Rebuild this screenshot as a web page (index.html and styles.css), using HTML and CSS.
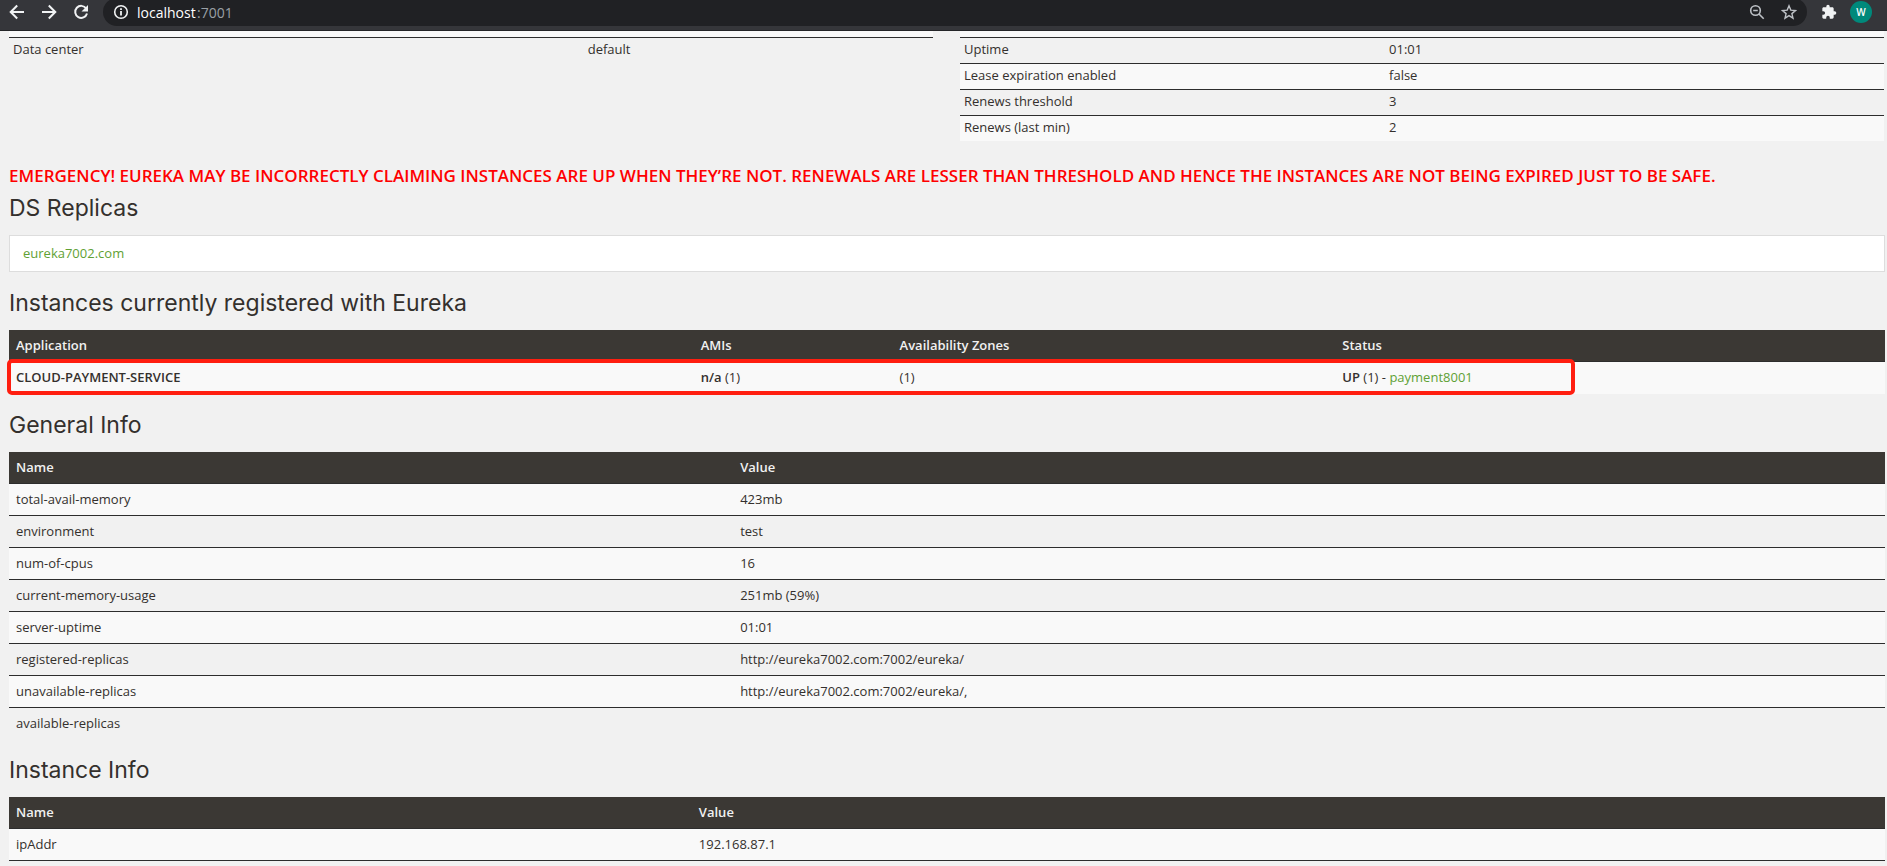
FILE: index.html
```html
<!DOCTYPE html>
<html lang="en">
<head>
    <meta charset="UTF-8">
    <meta name="viewport" content="width=device-width, initial-scale=1.0">
    <title>Eureka</title>
    <link rel="stylesheet" href="styles.css">
</head>
<body>
    <header class="toolbar">
        <div class="nav-buttons">
            <button class="icon-button" aria-label="Back">
                <svg width="16" height="16" viewBox="0 0 16 16" fill="none" stroke="currentColor" stroke-width="2"><path d="M15 8H2.500M8.200 1.500L1.700 8l6.500 6.500"/></svg>
            </button>
            <button class="icon-button" aria-label="Forward">
                <svg width="16" height="16" viewBox="0 0 16 16" fill="none" stroke="currentColor" stroke-width="2"><path d="M1 8h12.500M7.800 1.500L14.300 8l-6.500 6.500"/></svg>
            </button>
            <button class="icon-button" aria-label="Reload">
                <svg width="16" height="16" viewBox="0 0 16 16"><path d="M13.200 4.500A6 6 0 1 0 14 9.500" fill="none" stroke="currentColor" stroke-width="2"/><path d="M15 1v6.500H8.500z" fill="currentColor"/></svg>
            </button>
        </div>
        <div class="omnibox">
            <button class="icon-button" aria-label="Site information">
                <svg width="16" height="16" viewBox="0 0 16 16" fill="none" stroke="currentColor"><circle cx="8" cy="8" r="6.300" stroke-width="1.600"/><path d="M8 7v4.500M8 4.200v1.800" stroke-width="1.800"/></svg>
            </button>
            <label class="address"><input class="address-host" type="text" value="localhost" aria-label="Address">:7001</label>
            <button class="icon-button muted" aria-label="Zoom out">
                <svg width="16" height="16" viewBox="0 0 16 16" fill="none" stroke="currentColor" stroke-width="1.600"><circle cx="6.500" cy="6.500" r="4.800"/><path d="M10 10l4.700 4.700M4.200 6.500h4.600"/></svg>
            </button>
            <button class="icon-button muted" aria-label="Bookmark this page">
                <svg width="16" height="16" viewBox="0 0 16 16" fill="none" stroke="currentColor" stroke-width="1.400"><path d="M8 1.800l1.800 4.300 4.700.4-3.600 3.100 1.100 4.600L8 11.700l-4 2.500 1.100-4.600L1.500 6.500l4.700-.4z"/></svg>
            </button>
        </div>
        <button class="icon-button" aria-label="Extensions">
            <svg width="16" height="16" viewBox="0 0 24 24" fill="currentColor"><path d="M20.500 11H19V7c0-1.100-.9-2-2-2h-4V3.500a2.500 2.500 0 0 0-5 0V5H4c-1.100 0-2 .9-2 2v3.800h1.500a2.700 2.700 0 0 1 0 5.400H2V20c0 1.100.9 2 2 2h3.800v-1.500a2.700 2.700 0 0 1 5.400 0V22H17c1.100 0 2-.9 2-2v-4h1.500a2.500 2.500 0 0 0 0-5z"/></svg>
        </button>
        <button class="avatar">W</button>
    </header>

    <main class="content">
        <div class="status-row">
            <table class="table table-condensed table-left">
                <tbody>
                    <tr><td>Data center</td><td>default</td></tr>
                </tbody>
            </table>
            <table class="table table-condensed table-right">
                <tbody>
                    <tr><td>Uptime</td><td>01:01</td></tr>
                    <tr><td>Lease expiration enabled</td><td>false</td></tr>
                    <tr><td>Renews threshold</td><td>3</td></tr>
                    <tr><td>Renews (last min)</td><td>2</td></tr>
                </tbody>
            </table>
        </div>

        <h4 class="emergency">EMERGENCY! EUREKA MAY BE INCORRECTLY CLAIMING INSTANCES ARE UP WHEN THEY’RE NOT. RENEWALS ARE LESSER THAN THRESHOLD AND HENCE THE INSTANCES ARE NOT BEING EXPIRED JUST TO BE SAFE.</h4>

        <h1>DS Replicas</h1>
        <ul class="replicas">
            <li><a href="#">eureka7002.com</a></li>
        </ul>

        <h1>Instances currently registered with Eureka</h1>
        <div class="highlight">
            <table class="table table-instances">
                <thead>
                    <tr><th>Application</th><th>AMIs</th><th>Availability Zones</th><th>Status</th></tr>
                </thead>
                <tbody>
                    <tr>
                        <td><b>CLOUD-PAYMENT-SERVICE</b></td>
                        <td><b>n/a</b> (1)</td>
                        <td>(1)</td>
                        <td><b>UP</b> (1) - <a href="#">payment8001</a></td>
                    </tr>
                </tbody>
            </table>
        </div>

        <h1>General Info</h1>
        <table class="table table-general">
            <thead>
                <tr><th>Name</th><th>Value</th></tr>
            </thead>
            <tbody>
                <tr><td>total-avail-memory</td><td>423mb</td></tr>
                <tr><td>environment</td><td>test</td></tr>
                <tr><td>num-of-cpus</td><td>16</td></tr>
                <tr><td>current-memory-usage</td><td>251mb (59%)</td></tr>
                <tr><td>server-uptime</td><td>01:01</td></tr>
                <tr><td>registered-replicas</td><td>http://eureka7002.com:7002/eureka/</td></tr>
                <tr><td>unavailable-replicas</td><td>http://eureka7002.com:7002/eureka/,</td></tr>
                <tr><td>available-replicas</td><td></td></tr>
            </tbody>
        </table>

        <h1>Instance Info</h1>
        <table class="table table-instance">
            <thead>
                <tr><th>Name</th><th>Value</th></tr>
            </thead>
            <tbody>
                <tr><td>ipAddr</td><td>192.168.87.1</td></tr>
            </tbody>
        </table>
    </main>
</body>
</html>
```

FILE: styles.css
```css
:root {
    --page: #f1f1f1;
    --stripe: #f9f9f9;
    --dark: #3b3834;
    --line: #2d2d2d;
    --text: #34302d;
    --link: #5fa134;
}

* {
    box-sizing: border-box;
}

body {
    margin: 0;
    background: var(--page);
    color: var(--text);
    font-family: "Open Sans", "Noto Sans", sans-serif;
    font-size: 13px;
    line-height: 19px;
}

a {
    color: var(--link);
    text-decoration: none;
}

b {
    font-weight: 600;
}

button {
    border: none;
    padding: 0;
    background: none;
    font-family: inherit;
    cursor: pointer;
}

/* browser bar */
.toolbar {
    display: flex;
    align-items: center;
    height: 31px;
    padding: 0 15px 6px 9px;
    background: #35363a;
    border-bottom: 1px solid #242528;
    color: #f1f3f4;
}

.nav-buttons {
    display: flex;
    gap: 16px;
    margin-right: 14px;
}

.icon-button {
    display: flex;
    flex: none;
    color: inherit;
}

.icon-button.muted {
    color: #bdc1c6;
}

.omnibox {
    display: flex;
    flex: 1;
    align-items: center;
    gap: 16px;
    height: 28px;
    margin-right: 14px;
    padding: 0 10px;
    border-radius: 14px;
    background: #202124;
}

.address {
    flex: 1;
    display: flex;
    align-items: center;
    margin-left: -8px;
    color: #9aa0a6;
    font-size: 14px;
}

.address-host {
    width: 60px;
    padding: 0;
    border: none;
    outline: none;
    background: none;
    color: #fff;
    font: inherit;
}

.avatar {
    width: 22px;
    height: 22px;
    margin-left: 13px;
    border-radius: 50%;
    background: #00897b;
    color: #fff;
    font-size: 10px;
    font-weight: 600;
}

/* page */
.content {
    padding: 0 2px 0 9px;
}

h1 {
    margin: 18px 0 14px;
    font-family: Inter, "Open Sans", sans-serif;
    font-size: 23px;
    font-weight: 400;
    line-height: 26px;
}

.table {
    width: 100%;
    border-spacing: 0;
    table-layout: fixed;
}

.table th,
.table td {
    padding: 6px 7px;
    text-align: left;
}

.table th {
    background: var(--dark);
    color: #f1f1f1;
    font-weight: 600;
}

.table td {
    height: 32px;
    border-top: 1px solid var(--line);
}

.table tbody tr:nth-child(odd) {
    background: var(--stripe);
}

.status-row {
    display: grid;
    grid-template-columns: 1fr 1fr;
    align-items: start;
    gap: 27px;
    padding-right: 1px;
}

.table-condensed {
    border-top: 6px solid var(--stripe);
}

.table-condensed td {
    height: 26px;
    padding: 2px 4px 4px;
}

.table-condensed tbody tr:nth-child(odd) {
    background: none;
}

.table-condensed tbody tr:nth-child(even) {
    background: var(--stripe);
}

.table-left td:first-child {
    width: 62.2%;
}

.table-right td:first-child {
    width: 46%;
}

.emergency {
    margin: 25px 0 8px;
    color: #ff0000;
    font-size: 17px;
    font-weight: 600;
    line-height: 20px;
}

.emergency + h1 {
    margin-top: 9px;
}

.replicas {
    margin: 0;
    padding: 8px 13px;
    border: 1px solid #ddd;
    background: #fff;
    list-style: none;
}

.highlight {
    position: relative;
}

/* marker drawn round the registered service */
.highlight::after {
    content: '';
    position: absolute;
    left: -2px;
    bottom: -1px;
    box-sizing: border-box;
    width: 83.6%;
    height: 36px;
    border: 4px solid #ff1e10;
    border-radius: 5px;
    pointer-events: none;
}

.table-instances td {
    height: 33px;
    border-bottom: 1px solid var(--stripe);
}

.table-instances th:nth-child(1) {
    width: 36.5%;
}

.table-instances th:nth-child(2) {
    width: 10.6%;
}

.table-instances th:nth-child(3) {
    width: 23.6%;
}

.table-general th:first-child {
    width: 38.6%;
}

.table-instance {
    border-bottom: 1px solid var(--line);
}

.table-instance th:first-child {
    width: 36.4%;
}
```
